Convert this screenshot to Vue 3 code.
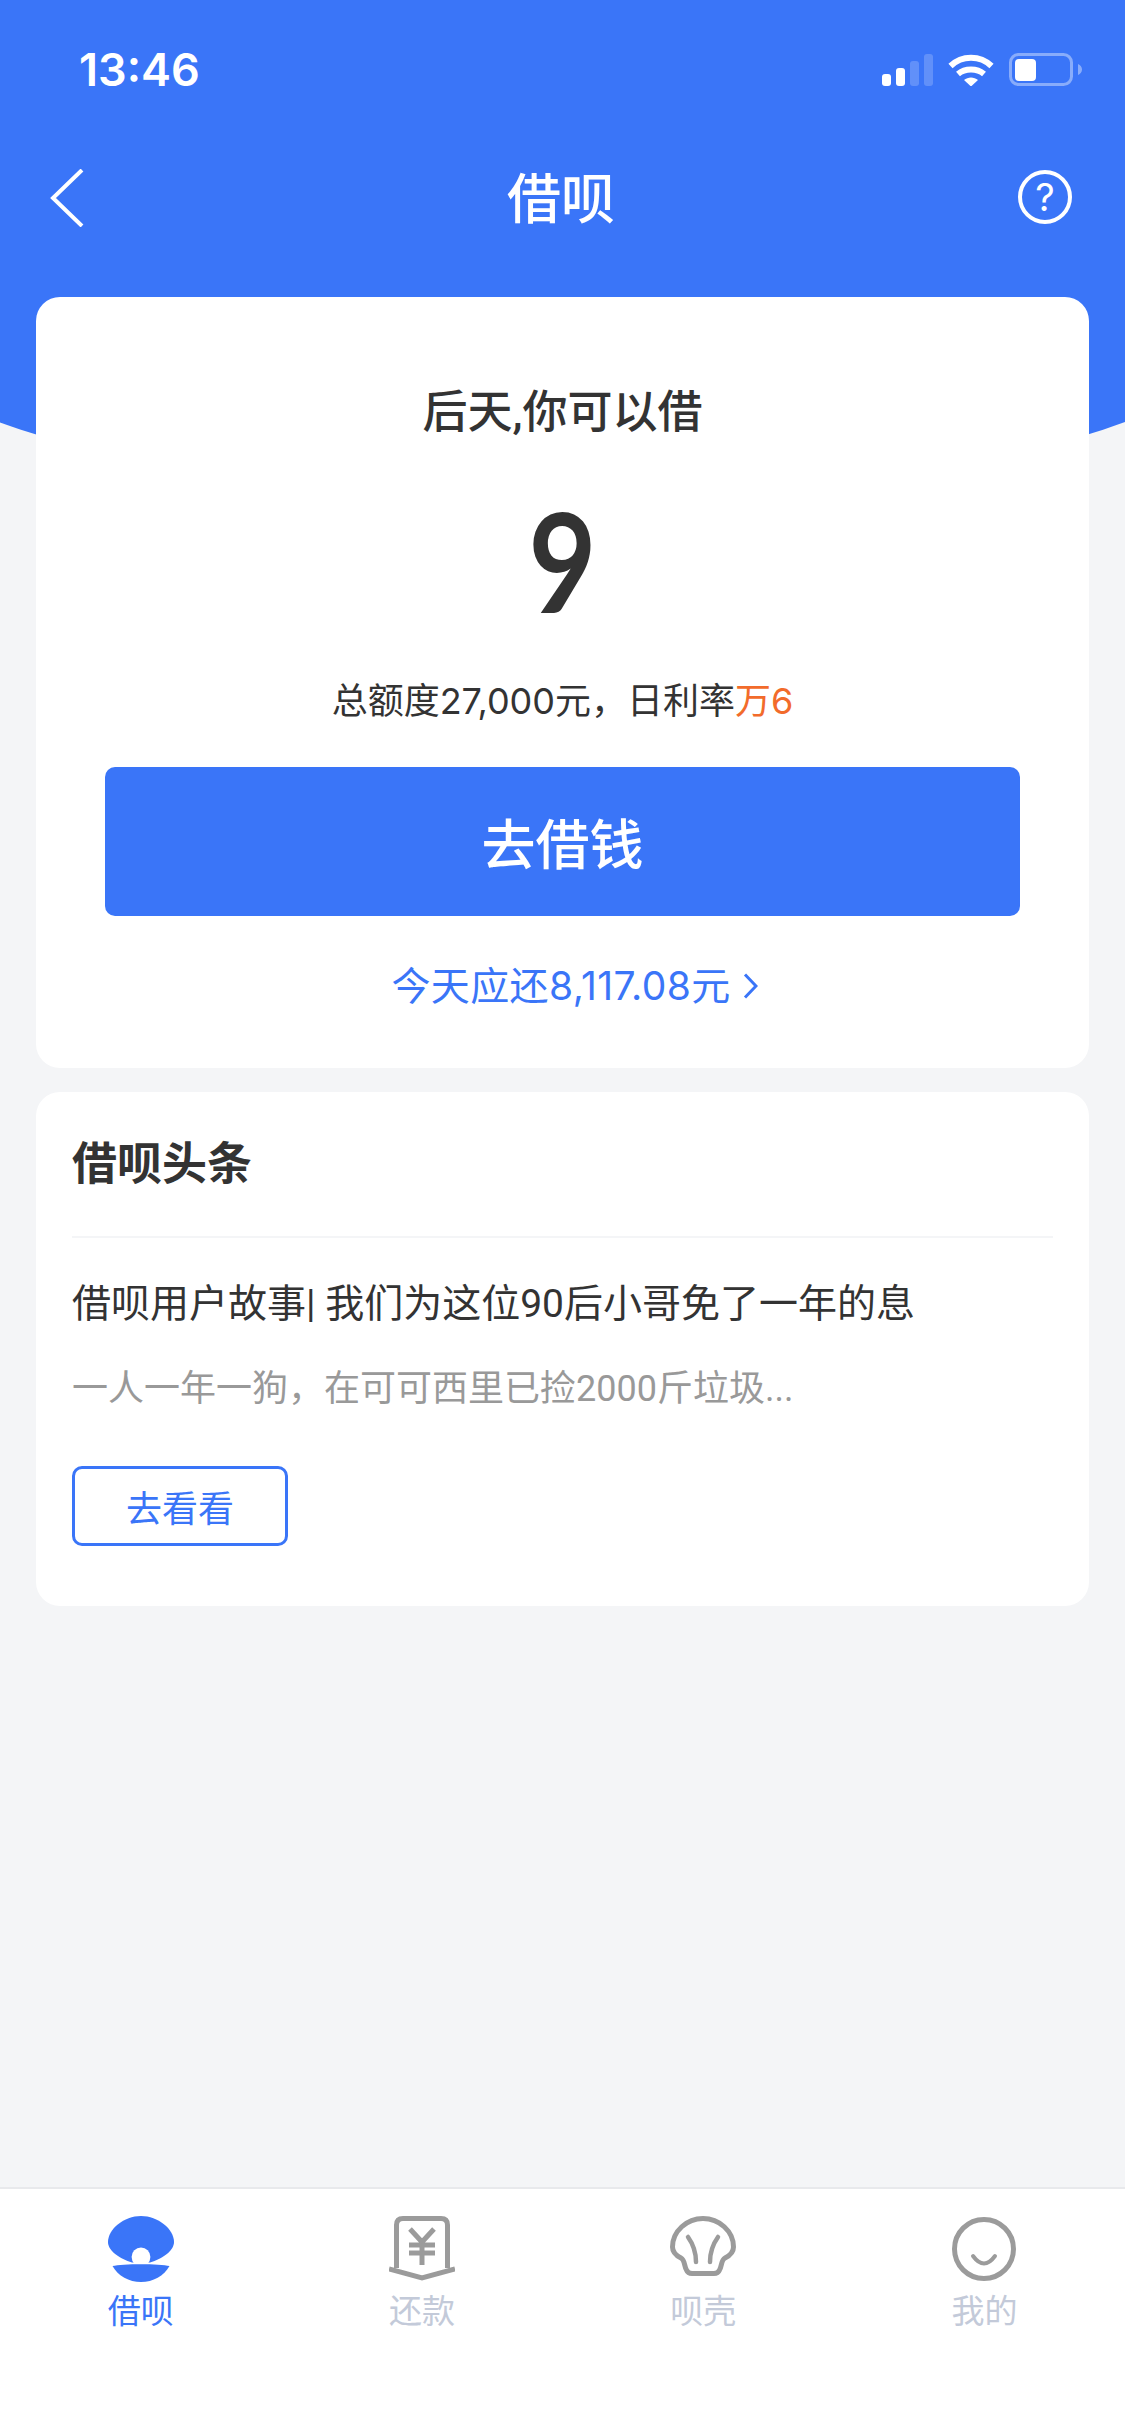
<template>
  <div class="page">
    <div class="header-bg"></div>

    <div class="status-bar">
      <span class="time">13:46</span>
      <div class="status-icons">
        <svg width="51" height="32" viewBox="0 0 51 32" fill="#fff">
          <rect x="0" y="20" width="9" height="12" rx="3" />
          <rect x="14" y="14" width="9" height="18" rx="3" />
          <rect x="28" y="7" width="9" height="25" rx="3" opacity=".2" />
          <rect x="42" y="0" width="9" height="32" rx="3" opacity=".2" />
        </svg>
        <svg width="46" height="33" viewBox="0 0 46 33" fill="none" stroke="#fff" stroke-width="6">
          <path d="M2.500 13C14 2 32 2 43.500 13" />
          <path d="M10 21C17 15 29 15 36 21" />
          <path d="M16 27C20 23.500 26 23.500 30 27L23 33.500Z" fill="#fff" stroke="none" />
        </svg>
        <svg width="73" height="33" viewBox="0 0 73 33" fill="#fff">
          <rect x="1.500" y="1.500" width="61" height="30" rx="8" fill="none" stroke="#fff" stroke-width="3" opacity=".4" />
          <rect x="6" y="6" width="21" height="22" rx="4" />
          <path d="M69 11C71.500 12 73 14 73 16.500C73 19 71.500 21 69 22Z" opacity=".4" />
        </svg>
      </div>
    </div>

    <div class="nav">
      <svg width="34" height="58" viewBox="0 0 34 58" fill="none" stroke="#fff" stroke-width="4">
        <path d="M32 1L3 29L32 57" />
      </svg>
      <span class="nav-title">借呗</span>
      <div class="help">?</div>
    </div>

    <div class="main">
      <div class="card card-loan">
        <div class="loan-title">后天,你可以借</div>
        <div class="loan-amount">9</div>
        <div class="loan-sub">总额度27,000元，日利率<span class="orange">万6</span></div>
        <button class="loan-btn">去借钱</button>
        <div class="loan-link">
          今天应还8,117.08元
          <svg width="15" height="26" viewBox="0 0 15 26" fill="none" stroke="#3a75f8" stroke-width="3">
            <path d="M2 1.500L13 13L2 24.500" />
          </svg>
        </div>
      </div>

      <div class="card card-news">
        <div class="news-title">借呗头条</div>
        <div class="news-story">借呗用户故事| 我们为这位90后小哥免了一年的息</div>
        <div class="news-desc">一人一年一狗，在可可西里已捡2000斤垃圾...</div>
        <button class="news-btn">去看看</button>
      </div>
    </div>

    <div class="tabbar">
      <div v-for="tab in tabs" :key="tab.key" class="tab" :class="{ active: tab.key === 'loan' }">
        <svg v-if="tab.key === 'loan'" width="66" height="66" viewBox="0 0 66 66">
          <path d="M33 0C50 0 66 13 66 26C66 35 54 43 42 46.500H24C12 43 0 35 0 26C0 13 16 0 33 0Z" fill="#3a75f8" />
          <circle cx="33" cy="41" r="9.400" fill="#fff" />
          <path d="M4.500 50C14 47.500 52 47.500 61.500 50C56 60 45 66 33 66C21 66 10 60 4.500 50Z" fill="#3a75f8" />
        </svg>
        <svg v-else-if="tab.key === 'repay'" width="66" height="66" viewBox="0 0 66 66" fill="none" stroke="#9b9b9b" stroke-width="5">
          <path d="M7.500 52V9Q7.500 2.500 14 2.500H52Q58.500 2.500 58.500 9V52" />
          <path d="M0 53L33 62L66 53" />
          <path d="M21 13L33 26L45 13M33 26V49M20 29H46M20 37H46" />
        </svg>
        <svg v-else-if="tab.key === 'shell'" width="66" height="66" viewBox="0 0 66 66" fill="none" stroke="#9b9b9b" stroke-width="5" stroke-linecap="round">
          <path d="M33 2.500C49 2.500 63.500 15 63.500 31C63.500 37 59 40 55 42C51 44 52 50 49.500 54C48.500 56.500 47 57.500 44 57.500H22C19 57.500 17.500 56.500 16.500 54C14 50 15 44 11 42C7 40 2.500 37 2.500 31C2.500 15 17 2.500 33 2.500Z" />
          <path d="M18 21C23 28 26 36 26 46M48 21C43 28 40 36 40 46" stroke-width="4.500" />
        </svg>
        <svg v-else width="66" height="66" viewBox="0 0 66 66" fill="none" stroke="#9b9b9b" stroke-width="5" stroke-linecap="round">
          <circle cx="33" cy="33" r="29.500" />
          <path d="M22 40Q33 55 44 40" stroke-width="4" />
        </svg>
        <span class="tab-label">{{ tab.label }}</span>
      </div>
    </div>
  </div>
</template>

<script setup>
const tabs = [
  { key: "loan", label: "借呗" },
  { key: "repay", label: "还款" },
  { key: "shell", label: "呗壳" },
  { key: "mine", label: "我的" },
];
</script>

<style>
body {
  margin: 0;
}
</style>

<style scoped>
.page {
  position: relative;
  width: 1125px;
  height: 2436px;
  display: flex;
  flex-direction: column;
  overflow: hidden;
  background: #f4f5f7;
  color: #333;
  font-family: Inter, "Noto Sans CJK SC", sans-serif;
}
.header-bg {
  position: absolute;
  top: 0;
  left: -138px;
  width: 1400px;
  height: 498px;
  background: #3a75f8;
  border-radius: 0 0 700px 700px / 0 0 187px 187px;
}
.status-bar,
.nav,
.main,
.tabbar {
  position: relative;
}
.status-bar {
  height: 138px;
  padding: 0 43px 0 79px;
  display: flex;
  align-items: center;
  justify-content: space-between;
  box-sizing: border-box;
}
.time {
  color: #fff;
  font-size: 45px;
  font-weight: 600;
}
.status-icons {
  display: flex;
  align-items: flex-end;
  gap: 15px;
}
.status-icons svg {
  display: block;
}
.nav {
  height: 120px;
  padding: 0 53px 0 50px;
  display: grid;
  grid-template-columns: 1fr auto 1fr;
  align-items: center;
  box-sizing: border-box;
}
.nav-title {
  margin-bottom: 5px;
  color: #fff;
  font-size: 54px;
  font-weight: 500;
}
.help {
  justify-self: end;
  width: 54px;
  height: 54px;
  margin-bottom: 2px;
  border: 4px solid #fff;
  border-radius: 50%;
  box-sizing: border-box;
  color: #fff;
  font-size: 38px;
  line-height: 46px;
  text-align: center;
}
.main {
  flex: 1;
  padding: 39px 36px 0;
}
.card {
  background: #fff;
  border-radius: 24px;
}
.card-loan {
  height: 771px;
  padding: 86px 69px 0;
  box-sizing: border-box;
  text-align: center;
}
.loan-title {
  font-family: Roboto, "Noto Sans CJK SC", sans-serif;
  font-size: 45px;
  font-weight: 500;
  line-height: 60px;
}
.loan-amount {
  margin-top: 42px;
  font-family: Lato, sans-serif;
  font-size: 138px;
  font-weight: 700;
  line-height: 150px;
  transform: scaleX(0.85);
}
.loan-sub {
  margin-top: 41px;
  font-size: 36px;
  line-height: 50px;
}
.orange {
  color: #f26b2b;
}
.loan-btn {
  display: block;
  width: 100%;
  height: 149px;
  margin-top: 41px;
  border: 0;
  border-radius: 10px;
  background: #3a75f8;
  color: #fff;
  font-family: inherit;
  font-size: 54px;
  font-weight: 500;
}
.loan-link {
  margin-top: 45px;
  padding-left: 24px;
  display: flex;
  align-items: center;
  justify-content: center;
  gap: 12px;
  color: #3a75f8;
  font-size: 39px;
  line-height: 50px;
  letter-spacing: 0.4px;
}
.card-news {
  margin-top: 24px;
  padding: 42px 36px 60px;
}
.news-title {
  padding-bottom: 42px;
  border-bottom: 2px solid #f4f5f7;
  font-size: 45px;
  font-weight: 700;
  line-height: 60px;
}
.news-story {
  margin-top: 41px;
  font-family: Roboto, "Noto Sans CJK SC", sans-serif;
  font-size: 39px;
  line-height: 50px;
}
.news-desc {
  margin-top: 35px;
  color: #999;
  font-family: Roboto, "Noto Sans CJK SC", sans-serif;
  font-size: 36px;
  line-height: 50px;
}
.news-btn {
  display: block;
  width: 216px;
  height: 80px;
  margin-top: 52px;
  border: 3px solid #3a75f8;
  border-radius: 10px;
  background: #fff;
  color: #3a75f8;
  font-family: inherit;
  font-size: 36px;
}
.tabbar {
  height: 249px;
  padding-top: 27px;
  display: grid;
  grid-template-columns: repeat(4, 1fr);
  align-items: start;
  box-sizing: border-box;
  background: #fff;
  border-top: 2px solid #e8e9ec;
}
.tab {
  display: flex;
  flex-direction: column;
  align-items: center;
}
.tab-label {
  margin-top: 9px;
  color: #c3cad9;
  font-size: 33px;
  line-height: 40px;
}
.tab.active .tab-label {
  color: #3a75f8;
}
</style>
